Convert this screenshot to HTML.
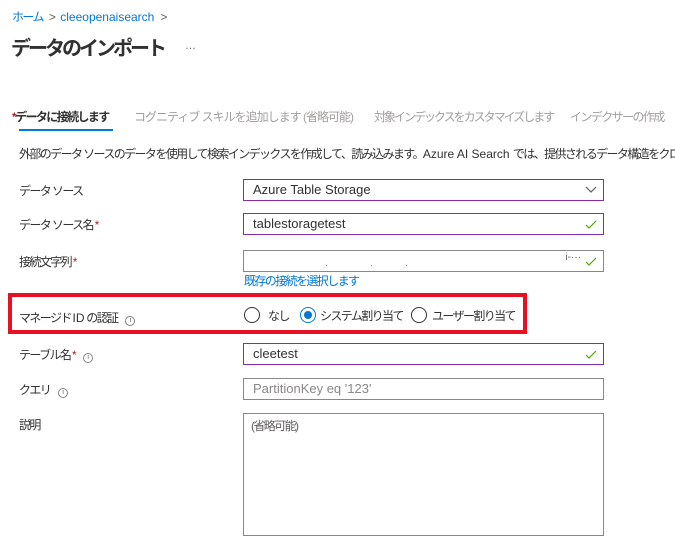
<!DOCTYPE html>
<html><head><meta charset="utf-8">
<style>
*{box-sizing:border-box;margin:0;padding:0}
body{width:675px;height:552px;background:#fff;font-family:"Liberation Sans","Noto Sans CJK JP",sans-serif;color:#323130;position:relative;overflow:hidden;font-size:12px}
.a{position:absolute;white-space:nowrap}
.j{letter-spacing:-1.6px}
.bc{left:12px;top:8px;font-size:12px;color:#0078d4}
.bc span{color:#605e5c;margin:0 6px}
h1{position:absolute;left:11px;top:32px;font-size:20px;font-weight:bold;color:#323130;letter-spacing:-3px}
.dots{left:185px;top:40px;color:#605e5c;font-size:11px}
.tab{top:108px;font-size:12px;color:#a19f9d}
.tabon{color:#323130;font-weight:bold}
.ul{left:19px;top:129px;width:94px;height:2px;background:#0078d4}
.desc{left:19px;top:145px;font-size:12px;width:656px;overflow:hidden}
.lbl{left:19px;font-size:12px}
.req{color:#a4262c}
.inp{position:absolute;left:243px;width:361px;height:22px;border:1px solid #8a8886;font-size:13px;padding:2px 9px;color:#323130}
.pur{border:1px solid #8a2da5}
.ck{position:absolute;right:6px;top:6px}
.info{display:inline-block;width:10px;height:10px;border:1px solid #8a8886;border-radius:50%;font-size:7px;line-height:8px;text-align:center;color:#605e5c;vertical-align:0;margin-left:8px;letter-spacing:0}
.red{left:8px;top:293px;width:519px;height:41px;border:4px solid #e81123}
.rad{position:absolute;top:307px;width:16px;height:16px;border:1px solid #323130;border-radius:50%}
.rad.on{border-color:#0078d4}
.rad.on:after{content:"";position:absolute;left:3px;top:3px;width:8px;height:8px;border-radius:50%;background:#0078d4}
.rt{top:307px;font-size:12px}
</style></head><body>
<div class="a bc j">ホーム<span>&gt;</span><span style="color:#0078d4;margin:0;letter-spacing:0">cleeopenaisearch</span><span>&gt;</span></div>
<h1>データのインポート</h1>
<div class="a dots">…</div>
<div class="a tab tabon j" style="left:12px"><span class="req">*</span>データに接続します</div>
<div class="a ul"></div>
<div class="a tab j" style="left:134px;letter-spacing:-1px">コグニティブ スキルを追加します (省略可能)</div>
<div class="a tab j" style="left:374px;letter-spacing:-2px">対象インデックスをカスタマイズします</div>
<div class="a tab j" style="left:570px">インデクサーの作成</div>
<div class="a desc j">外部のデータ ソースのデータを使用して検索インデックスを作成して、読み込みます。<span style="letter-spacing:0">Azure AI Search </span>では、提供されるデータ構造をクロールし</div>

<div class="a lbl j" style="top:182px">データ ソース</div>
<div class="inp pur" style="top:179px">Azure Table Storage<svg class="ck" style="top:6px" width="12" height="8" viewBox="0 0 12 8"><path d="M1 1l5 5 5-5" fill="none" stroke="#605e5c" stroke-width="1.2"/></svg></div>

<div class="a lbl j" style="top:216px">データ ソース名 <span class="req">*</span></div>
<div class="inp pur" style="top:213px">tablestoragetest<svg class="ck" width="12" height="9" viewBox="0 0 12 9"><path d="M1 5l3 3 7-7" fill="none" stroke="#57a300" stroke-width="1.2"/></svg></div>

<div class="a lbl j" style="top:253px">接続文字列 <span class="req">*</span></div>
<div class="inp" style="top:250px"><span style="position:absolute;left:82px;top:14px;width:1px;height:1px;background:#888"></span><span style="position:absolute;left:127px;top:14px;width:1px;height:1px;background:#888"></span><span style="position:absolute;left:162px;top:14px;width:1px;height:1px;background:#888"></span><span style="position:absolute;right:22px;top:1px;font-size:10px;color:#605e5c">i-···</span><svg class="ck" width="12" height="9" viewBox="0 0 12 9"><path d="M1 5l3 3 7-7" fill="none" stroke="#57a300" stroke-width="1.2"/></svg></div>
<div class="a j" style="left:244px;top:272px;font-size:12px;color:#0078d4">既存の接続を選択します</div>

<div class="a red"></div>
<div class="a lbl j" style="top:309px">マネージド <span style="letter-spacing:0">ID</span> の認証<span class="info">i</span></div>
<span class="rad" style="left:244px"></span><div class="a rt j" style="left:268px">なし</div>
<span class="rad on" style="left:300px"></span><div class="a rt j" style="left:320px">システム割り当て</div>
<span class="rad" style="left:411px"></span><div class="a rt j" style="left:432px">ユーザー割り当て</div>

<div class="a lbl j" style="top:346px">テーブル名 <span class="req">*</span><span class="info">i</span></div>
<div class="inp pur" style="top:343px">cleetest<svg class="ck" width="12" height="9" viewBox="0 0 12 9"><path d="M1 5l3 3 7-7" fill="none" stroke="#57a300" stroke-width="1.2"/></svg></div>

<div class="a lbl j" style="top:381px">クエリ<span class="info">i</span></div>
<div class="inp" style="top:378px;color:#8a8886">PartitionKey eq '123'</div>

<div class="a lbl j" style="top:416px">説明</div>
<div class="inp j" style="top:413px;height:123px;padding:3px 7px;color:#605e5c;font-size:12px">(省略可能)</div>
</body></html>
